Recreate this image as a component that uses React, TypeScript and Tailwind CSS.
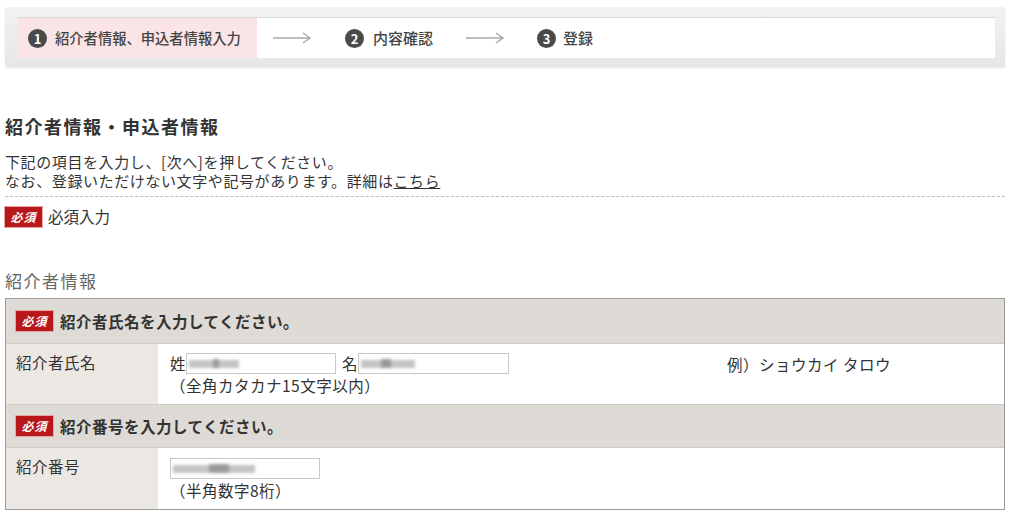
import React from 'react';

const FONT = '"Noto Sans CJK JP", "Noto Sans", "Liberation Sans", sans-serif';

// Red "必須" badge
const Required = () => (
  <span className="inline-flex items-center justify-center w-[37px] h-[20px] bg-[#b8171c] text-white text-[12px] font-bold italic leading-none tracking-[1px] shadow-[0_0_0_1px_#e8a5a5] shrink-0">
    必須
  </span>
);

const StepNum = ({ n }: { n: number }) => (
  <span className="inline-flex items-center justify-center w-[19px] h-[19px] rounded-full bg-[#4a4a4a] text-white text-[13px] font-bold leading-none">
    {n}
  </span>
);

const Arrow = () => (
  <svg width="40" height="12" viewBox="0 0 40 12" className="shrink-0">
    <path d="M1 6H38M31 1l7 5-7 5" fill="none" stroke="#a9a9a9" strokeWidth="1.4" />
  </svg>
);

// blurred placeholder inside the text inputs
const BlurInput = ({ width, blocks }: { width: number; blocks: number[] }) => (
  <div
    className="h-[21px] border border-[#c8c8c8] bg-white flex items-center pl-[2px] overflow-hidden shrink-0"
    style={{ width }}
  >
    <div className="flex items-center blur-[1.5px]">
      {blocks.map((w, i) => (
        <div key={i} className={i % 3 === 2 ? 'h-[9px] bg-[#9a9a9a]' : 'h-[8px] bg-[#c4c4c4]'} style={{ width: w }} />
      ))}
    </div>
  </div>
);

const App = () => {
  return (
    <div className="w-[1010px] h-[516px] bg-white overflow-hidden text-[#333]" style={{ fontFamily: FONT }}>
      {/* Step bar */}
      <div className="pt-[7px] px-[5px]">
        <div className="h-[60px] bg-gradient-to-b from-[#f2f2f2] to-[#e6e6e6] rounded-[3px] shadow-[0_1px_2px_rgba(0,0,0,0.12)] pt-[10px] pl-[12px] pr-[10px]">
          <div className="h-[41px] bg-white border-t border-[#d9d9d9] flex items-center">
            <div className="h-full w-[240px] bg-[#fae4e5] flex items-center pl-[11px] gap-[8px]">
              <StepNum n={1} />
              <span className="text-[14.3px] font-medium text-[#444]">紹介者情報、申込者情報入力</span>
            </div>
            <div className="ml-[15px]"><Arrow /></div>
            <div className="ml-[33px] flex items-center gap-[9px]">
              <StepNum n={2} />
              <span className="text-[15px] font-medium text-[#444]">内容確認</span>
            </div>
            <div className="ml-[32px]"><Arrow /></div>
            <div className="ml-[32px] flex items-center gap-[7px]">
              <StepNum n={3} />
              <span className="text-[15px] font-medium text-[#444]">登録</span>
            </div>
          </div>
        </div>
      </div>

      {/* Title and notes */}
      <div className="px-[5px]">
        <h1 className="mt-[47px] text-[18px] font-bold tracking-[1.5px] leading-[24px] text-[#333]">紹介者情報・申込者情報</h1>
        <p className="mt-[14px] text-[15px] tracking-[0.6px] leading-[19px]">
          下記の項目を入力し、[次へ]を押してください。
          <br />
          なお、登録いただけない文字や記号があります。詳細は<a className="underline">こちら</a>
        </p>
        <div className="mt-[6px] border-t border-dashed border-[#bbb]" />
        <div className="mt-[8px] flex items-center gap-[6px]">
          <Required />
          <span className="text-[15.5px]">必須入力</span>
        </div>

        <h2 className="mt-[43px] text-[17px] tracking-[1.5px] text-[#666] leading-[20px]">紹介者情報</h2>

        {/* Form table */}
        <div className="mt-[7px] border border-[#9c9c9c] w-[1000px] text-[15.5px] tracking-[0.5px]">
          <div className="h-[45px] bg-[#dedad5] flex items-center pl-[10px] gap-[7px] border-b border-[#cfcac4]">
            <Required />
            <span className="font-bold">紹介者氏名を入力してください。</span>
          </div>
          <div className="flex h-[61px] border-b border-[#cfcac4]">
            <div className="w-[152px] bg-[#ebe8e4] pl-[10px] pt-[7px]">紹介者氏名</div>
            <div className="flex-1 flex pl-[12px] pt-[9px]">
              <div className="w-[557px]">
                <div className="flex items-center leading-[21px]">
                  <span>姓</span>
                  <BlurInput width={150} blocks={[10, 14, 6, 12, 8]} />
                  <span className="ml-[6px]">名</span>
                  <BlurInput width={151} blocks={[8, 12, 10, 14, 10]} />
                </div>
                <div className="leading-[20px] mt-[1px]">（全角カタカナ15文字以内）</div>
              </div>
              <div className="pt-[1px] leading-[20px]">例）ショウカイ タロウ</div>
            </div>
          </div>
          <div className="h-[43px] bg-[#dedad5] flex items-center pl-[10px] gap-[7px] border-b border-[#cfcac4]">
            <Required />
            <span className="font-bold">紹介番号を入力してください。</span>
          </div>
          <div className="flex h-[61px]">
            <div className="w-[152px] bg-[#ebe8e4] pl-[10px] pt-[7px]">紹介番号</div>
            <div className="flex-1 pl-[12px] pt-[10px]">
              <BlurInput width={150} blocks={[20, 16, 20, 14, 12]} />
              <div className="leading-[20px] mt-[1px]">（半角数字8桁）</div>
            </div>
          </div>
        </div>
      </div>
    </div>
  );
};

export default App;
